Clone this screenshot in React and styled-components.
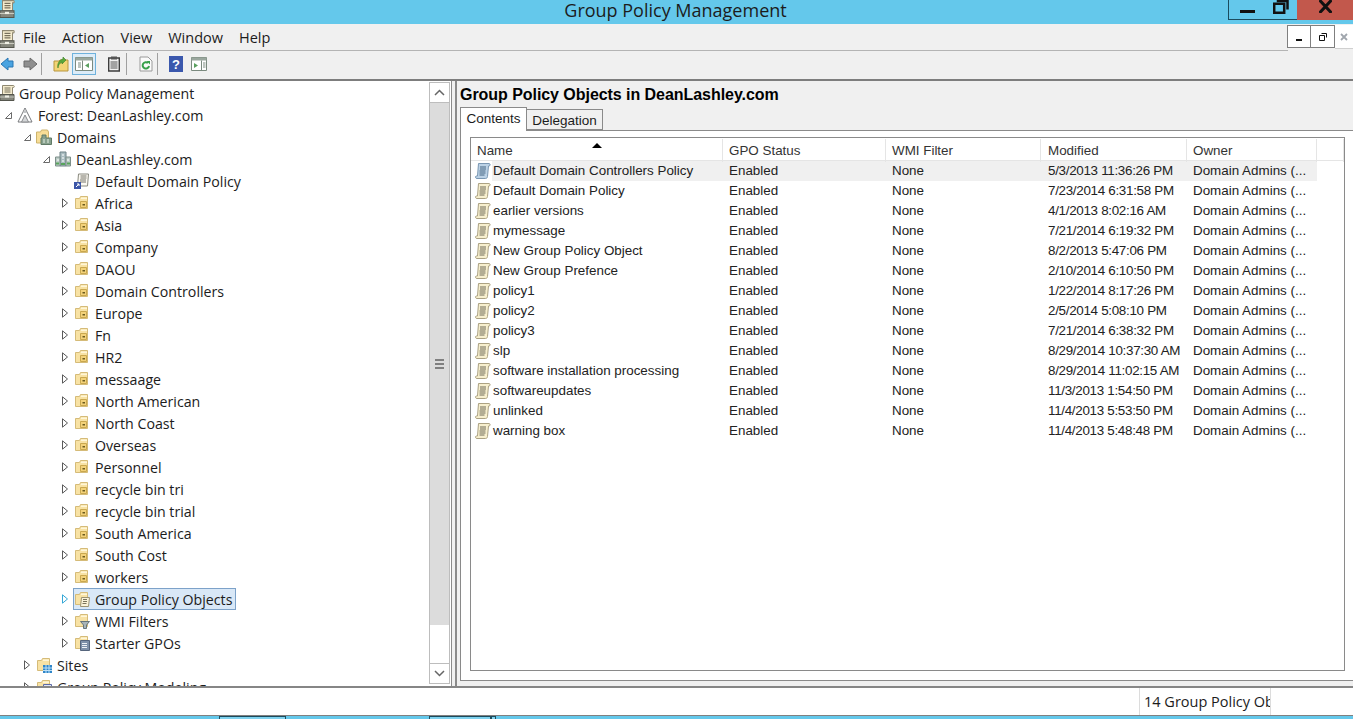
import React from "react";
import styled, { createGlobalStyle } from "styled-components";

const GlobalStyle = createGlobalStyle`
  html, body {
    margin: 0;
    height: 100%;
    overflow: hidden;
    background: #fff;
  }
  #root {
    height: 100%;
  }
`;

const treeFolders = [
  "Africa", "Asia", "Company", "DAOU", "Domain Controllers", "Europe", "Fn", "HR2",
  "messaage", "North American", "North Coast", "Overseas", "Personnel", "recycle bin tri",
  "recycle bin trial", "South America", "South Cost", "workers",
];

const gpoRows = [
  ["Default Domain Controllers Policy", "5/3/2013 11:36:26 PM"],
  ["Default Domain Policy", "7/23/2014 6:31:58 PM"],
  ["earlier versions", "4/1/2013 8:02:16 AM"],
  ["mymessage", "7/21/2014 6:19:32 PM"],
  ["New Group Policy Object", "8/2/2013 5:47:06 PM"],
  ["New Group Prefence", "2/10/2014 6:10:50 PM"],
  ["policy1", "1/22/2014 8:17:26 PM"],
  ["policy2", "2/5/2014 5:08:10 PM"],
  ["policy3", "7/21/2014 6:38:32 PM"],
  ["slp", "8/29/2014 10:37:30 AM"],
  ["software installation processing", "8/29/2014 11:02:15 AM"],
  ["softwareupdates", "11/3/2013 1:54:50 PM"],
  ["unlinked", "11/4/2013 5:53:50 PM"],
  ["warning box", "11/4/2013 5:48:48 PM"],
];

// icons
const ConsoleIcon = ({ height = 16 }) => (
  <svg width="16" height={height} viewBox="0 0 16 16" preserveAspectRatio="none">
    <path d="M2.500 .5h11c1 0 1 2 0 2h-1v7h-10z" fill="#f4ebcd" stroke="#8f8872" />
    <path d="M4.500 3h6M4.500 5h6M4.500 7h6" stroke="#77705c" />
    <path d="M0 9.500h14v6H0z" fill="#85867c" stroke="#55564d" />
    <path d="M0 12h14" stroke="#c9cabf" />
    <path d="M5 11.500h4" stroke="#f0f0e6" strokeWidth="2" />
  </svg>
);

const ForestIcon = () => (
  <svg width="16" height="16" viewBox="0 0 16 16">
    <path d="M8 1 15 15H1z" fill="#fff" stroke="#77797c" />
    <path d="M8 8 11.500 15H4.500z" fill="#d5d7d9" stroke="#8a8c8f" />
    <path d="M8 2 10 6H6z" fill="#c4c6c8" />
  </svg>
);

const DomainsIcon = () => (
  <svg width="16" height="16" viewBox="0 0 16 16">
    <path d="M.5 3h4l1-2h6l1 2v11H.5z" fill="#f7dd96" stroke="#cdb36c" />
    <path d="M6 6h4v3h5.500v6.500H5V9h1z" fill="#87a08d" stroke="#607a66" />
    <path d="M7 11h2M11 11h2M7 13h2M11 13h2" stroke="#e6f1e6" />
  </svg>
);

const DomainIcon = () => (
  <svg width="16" height="16" viewBox="0 0 16 16">
    <path d="M5 1h6v14H5z" fill="#a9bcc0" stroke="#6f8287" />
    <path d="M.5 6H5v9H.5zM11 6h4.500v9H11z" fill="#bccbc6" stroke="#7d8f8a" />
    <path d="M7 4h2M7 7h2M7 10h2M2 9h2M12 9h2" stroke="#fff" />
    <path d="M1 12.500h3M12 12.500h3M6 13h4" stroke="#58a55c" strokeWidth="2" />
  </svg>
);

const LinkedPolicyIcon = () => (
  <svg width="16" height="16" viewBox="0 0 16 16">
    <path d="M4.500 1h10l-1 12h-10z" fill="#fbf9f2" stroke="#8a8a80" />
    <path d="M6.500 3h6M6.500 5h6M6 7h6M6 9h6" stroke="#77756a" />
    <path d="M0 9h7v7H0z" fill="#3c56a8" />
    <path d="M2 14l3-3M3 11h2v2" stroke="#fff" fill="none" />
  </svg>
);

const FolderShape = ({ children }) => (
  <svg width="16" height="16" viewBox="0 0 16 16">
    <path d="M1.500 3.500h4l1-2h7v12h-12z" fill="#f8e2a4" stroke="#d5bb78" />
    <path d="M7 2.500h6v1.500H7z" fill="#fff6d8" />
    {children}
  </svg>
);

const OuIcon = () => (
  <FolderShape>
    <path d="M6.500 6.500h6v6h-6z" fill="#f3d27a" stroke="#caa84f" />
    <path d="M8.500 9h2.500v1.500H8.500z" fill="#6a5a20" />
  </FolderShape>
);

const GpoFolderIcon = () => (
  <FolderShape>
    <path d="M7.500 6.500h8l-1 9h-8z" fill="#fbf3d8" stroke="#9c9373" />
    <path d="M9 8.500h4M9 10.500h4M8.500 12.500h4" stroke="#7a735a" />
  </FolderShape>
);

const WmiIcon = () => (
  <FolderShape>
    <path d="M6.500 8.500h9l-3 3.500v3.500h-3V12z" fill="#a8b4b8" stroke="#68757a" />
  </FolderShape>
);

const StarterIcon = () => (
  <FolderShape>
    <path d="M6.500 5.500h9v10h-9z" fill="#7e90a8" stroke="#55657c" />
    <path d="M8 8.500h5M8 10.500h5M8 12.500h5" stroke="#eef2f6" />
  </FolderShape>
);

const SitesIcon = () => (
  <FolderShape>
    <path d="M7 8h9v8H7z" fill="#2f86c9" />
    <path d="M7 11h9M7 13.500h9M10 8v8M13 8v8" stroke="#bfe1f7" />
  </FolderShape>
);

const ModelingIcon = () => (
  <FolderShape>
    <path d="M7.500 5.500h8v9h-8z" fill="#dfe4f3" stroke="#5c6ba8" />
    <path d="M9 8.500h4M9 11.500h4" stroke="#3c56a8" />
  </FolderShape>
);

const ScrollIcon = ({ $blue }) => (
  <svg width="16" height="16" viewBox="0 0 16 16">
    <path
      d="M3.500.5h10.500c1.500 0 1.500 2.500 0 2.500h-.5l-1 10.500c-.2 1.500-1 2-2 2H2c-2 0-2-2.500-.5-2.500h1z"
      fill={$blue ? "#bcd2e6" : "#f7efce"}
      stroke={$blue ? "#7a97b3" : "#aca283"}
    />
    <path d="M5 4h6M5 6h6M4.500 8h6M4.500 10h6M4.500 12h5" stroke={$blue ? "#466683" : "#6f6a58"} />
  </svg>
);

const ExpandOpen = () => (
  <svg width="7" height="7" viewBox="0 0 7 7">
    <path d="M6.500.5v6h-6z" fill="#fff" stroke="#6b6b6b" />
  </svg>
);

const ExpandClosed = ({ $hot }) => (
  <svg width="6" height="10" viewBox="0 0 6 10">
    <path d="M.5.8 5.500 5 .5 9.200z" fill="#fff" stroke={$hot ? "#35a7d6" : "#5a5a5a"} />
  </svg>
);

const ForwardIcon = () => (
  <svg width="16" height="16" viewBox="0 0 16 16">
    <path d="M15 8 8 2v3H2v6h6v3z" fill="#8f8f8f" stroke="#6a6a6a" />
  </svg>
);

const UpIcon = () => (
  <svg width="16" height="16" viewBox="0 0 16 16">
    <path d="M1 5h5l1-1h8v11H1z" fill="#f3d475" stroke="#b8963f" />
    <path d="M5 12c0-3 2-5 4-6V8l4-4-3-3v2C6 4 4 8 5 12z" fill="#5aa83c" stroke="#3b7f25" strokeWidth=".6" />
  </svg>
);

const PaneLeftIcon = () => (
  <svg width="18" height="16" viewBox="0 0 18 16">
    <path d="M.5 1.500h17v13H.5z" fill="#fff" stroke="#7b8a7f" />
    <path d="M.5 1.500h17v3H.5z" fill="#9aa79e" />
    <path d="M3 7h3M3 9h3M3 11h3M7.500 4.500v10" stroke="#7b8a7f" />
    <path d="M14 7v5l-4-2.500z" fill="#5aa05f" />
  </svg>
);

const PaneRightIcon = () => (
  <svg width="16" height="16" viewBox="0 0 16 16">
    <path d="M.5 1.500h15v13H.5z" fill="#fff" stroke="#7b8a7f" />
    <path d="M.5 1.500h15v3H.5z" fill="#9aa79e" />
    <path d="M12 7h2.500M12 9h2.500M12 11h2.500M10.500 4.500v10" stroke="#7b8a7f" />
    <path d="M3 7v5l4-2.500z" fill="#5aa05f" />
  </svg>
);

const ClipboardIcon = () => (
  <svg width="12" height="16" viewBox="0 0 12 16">
    <path d="M.7 2h10.600v13H.7z" fill="#f2f2f2" stroke="#3d3d3d" strokeWidth="1.400" />
    <path d="M3 .5h6v3H3z" fill="#555" />
    <path d="M2.500 6h7M2.500 8h7M2.500 10h7M2.500 12h7" stroke="#555" />
  </svg>
);

const RefreshIcon = () => (
  <svg width="14" height="16" viewBox="0 0 14 16">
    <path d="M1 1h8l4 4v10H1z" fill="#fafafa" stroke="#9a9a9a" />
    <path d="M10 10a3.200 3.200 0 1 1-1-3" fill="none" stroke="#37a04a" strokeWidth="2" />
    <path d="M7.500 5h3.500v3.500z" fill="#37a04a" />
  </svg>
);

const HelpIcon = () => (
  <svg width="14" height="16" viewBox="0 0 14 16">
    <path d="M0 0h14v16H0z" fill="#3b58ad" />
    <text x="7" y="13" textAnchor="middle" fill="#fff" fontSize="13" fontWeight="700" fontFamily="Liberation Sans, sans-serif">?</text>
  </svg>
);

const MinGlyph = () => (
  <svg width="15" height="3" viewBox="0 0 15 3">
    <path d="M0 0h15v3H0z" fill="#111" />
  </svg>
);

const RestoreGlyph = () => (
  <svg width="16" height="14" viewBox="0 0 16 14">
    <path d="M5 0v1h9.500v8.500" fill="none" stroke="#111" strokeWidth="2.500" />
    <path d="M1.200 3.700h10v9h-10z" fill="none" stroke="#111" strokeWidth="2.500" />
  </svg>
);

const CloseGlyph = () => (
  <svg width="13" height="13" viewBox="0 0 13 13">
    <path d="M.5 0l12 13M12.500 0 .5 13" stroke="#111" strokeWidth="3" />
  </svg>
);

// window chrome
const Page = styled.div`
  display: flex;
  flex-direction: column;
  width: 1353px;
  height: 719px;
  overflow: hidden;
  background: #fff;
  font-family: "Open Sans", "Liberation Sans", sans-serif;
  color: #1c1c1c;
`;

const TitleBar = styled.div`
  display: grid;
  grid-template-columns: 1fr auto 1fr;
  align-items: start;
  flex: none;
  height: 24px;
  background: #64c8eb;
`;

const AppIcon = styled.div`
  display: flex;
  height: 18px;
`;

const TitleText = styled.div`
  margin-left: -2px;
  font-size: 18px;
  line-height: 20px;
`;

const WindowButtons = styled.div`
  display: flex;
  justify-content: flex-end;
`;

const CaptionButton = styled.div`
  display: flex;
  align-items: flex-start;
  justify-content: center;
  width: ${(p) => p.$width}px;
  height: 20px;
  box-sizing: border-box;
  padding-top: ${(p) => p.$top || 0}px;
  background: ${(p) => (p.$close ? "#c2584c" : "transparent")};
  border: ${(p) => (p.$close ? "none" : "1px solid #1b4c5e")};
  border-top: none;
  border-left-width: ${(p) => (p.$first || p.$close ? 1 : 0)}px;
  border-right-width: 0;
`;

const MenuRow = styled.div`
  display: flex;
  flex: none;
  height: 27px;
  background: #f0f0f0;
`;

const MenuBar = styled.div`
  display: flex;
  flex: 1;
  align-items: center;
  gap: 16px;
  box-sizing: border-box;
  border-bottom: 1px solid #b4b4b4;
  font-size: 14.5px;
`;

const MenuIcon = styled.span`
  display: flex;
  width: 16px;
  margin-right: -9px;
  margin-top: 3px;
`;

const MdiButtons = styled.div`
  display: flex;
  flex: none;
  width: 66px;
  height: 25px;
  padding-top: 1px;
  margin-left: -1px;
`;

const MdiButton = styled.div`
  display: flex;
  align-items: center;
  justify-content: center;
  width: 24px;
  height: 23px;
  box-sizing: border-box;
  padding-top: ${(p) => p.$low || 0}px;
  background: #fff;
  border: 1px solid #7f7f7f;
  border-left-width: ${(p) => (p.$first ? 1 : 0)}px;
`;

const MdiClose = styled.div`
  display: flex;
  align-items: center;
  justify-content: center;
  flex: 1;
  height: 23px;
  background: #fff;
  border-bottom: 1px solid #d0d0d0;
`;

const ToolBar = styled.div`
  display: flex;
  flex: none;
  align-items: center;
  height: 30px;
  box-sizing: border-box;
  padding-bottom: 3px;
  background: #f0f0f0;
  border-bottom: 2px solid #7d7d7d;
`;

const ToolSlot = styled.div`
  display: flex;
  align-items: center;
  justify-content: center;
  flex: none;
  box-sizing: border-box;
  width: ${(p) => p.$width}px;
  height: 22px;
  margin-left: ${(p) => p.$left || 0}px;
  background: ${(p) => (p.$active ? "#dcecf8" : "transparent")};
  border: ${(p) => (p.$active ? "1px solid #6fb2dc" : "none")};
`;

const ToolDivider = styled.div`
  flex: none;
  width: 1px;
  height: 22px;
  margin-left: ${(p) => p.$left}px;
  background: #a0a0a0;
`;

const Workspace = styled.div`
  display: flex;
  flex: none;
  height: 605px;
  border-bottom: 2px solid #868686;
`;

const TreePane = styled.div`
  display: flex;
  flex: none;
  width: 452px;
  box-sizing: border-box;
  background: #fff;
  border-right: 1px solid #8a8a8a;
`;

const TreeList = styled.div`
  flex: 1;
  min-width: 0;
  overflow: hidden;
  padding-top: 1px;
`;

const TreeRow = styled.div`
  display: flex;
  align-items: center;
  height: 22px;
  padding-left: ${(p) => (p.$level ? p.$level * 19 - 14 : 0)}px;
  font-size: 14.2px;
  white-space: nowrap;
`;

const ExpanderBox = styled.span`
  display: flex;
  align-items: center;
  flex: none;
  width: 12px;
`;

const TreeItem = styled.div`
  display: flex;
  align-items: center;
  height: 22px;
  box-sizing: border-box;
  margin-left: -1px;
  padding-right: 3px;
  background: ${(p) => (p.$selected ? "#d9e8f7" : "transparent")};
  border: 1px solid ${(p) => (p.$selected ? "#7da2c9" : "transparent")};
`;

const TreeIconBox = styled.span`
  display: flex;
  flex: none;
  width: 16px;
  margin-right: ${(p) => p.$gap}px;
`;

const TreeLabel = styled.span`
  margin-top: 2px;
  line-height: 20px;
`;

const ScrollBar = styled.div`
  display: flex;
  flex-direction: column;
  flex: none;
  width: 21px;
  box-sizing: border-box;
  margin: 1px 1px 2px 0;
  border-left: 1px solid #bdbdbd;
  border-right: 1px solid #bdbdbd;
  background: #fff;
`;

const ScrollButton = styled.div`
  display: flex;
  align-items: center;
  justify-content: center;
  flex: none;
  height: 21px;
  box-sizing: border-box;
  background: #fff;
  border-top: 1px solid #bdbdbd;
  border-bottom: 1px solid #bdbdbd;
`;

const ScrollThumb = styled.div`
  display: flex;
  flex: none;
  height: 522px;
  align-items: center;
  justify-content: center;
  background: #dcdcdc;
`;

const ScrollTrack = styled.div`
  flex: 1;
`;

const Grip = styled.div`
  width: 9px;
  height: 10px;
  background: repeating-linear-gradient(#808080 0 2px, transparent 2px 4px);
`;

const Splitter = styled.div`
  flex: none;
  width: 3px;
  background: #f0f0f0;
`;

const DetailPane = styled.div`
  display: flex;
  flex: 1;
  flex-direction: column;
  min-width: 0;
  box-sizing: border-box;
  border-left: 2px solid #8a8a8a;
  padding: 0 0 5px 3px;
  background: #f0f0f0;
`;

const PaneHeading = styled.div`
  flex: none;
  height: 25px;
  font-family: "Liberation Sans", Arial, sans-serif;
  font-size: 16px;
  font-weight: 700;
  line-height: 28px;
  letter-spacing: -0.05px;
  color: #000;
`;

const TabStrip = styled.div`
  display: flex;
  flex: none;
  align-items: flex-end;
  height: 24px;
  font-family: "Liberation Sans", Arial, sans-serif;
  font-size: 13.5px;
`;

const Tab = styled.div`
  position: relative;
  z-index: ${(p) => (p.$active ? 1 : 0)};
  box-sizing: border-box;
  flex: none;
  width: ${(p) => p.$width}px;
  height: ${(p) => (p.$active ? 24 : 21)}px;
  margin-bottom: ${(p) => (p.$active ? -1 : 0)}px;
  padding-top: 3px;
  text-align: center;
  background: ${(p) => (p.$active ? "#fff" : "#f0f0f0")};
  border: 1px solid #8a8a8a;
  border-bottom-width: ${(p) => (p.$active ? 0 : 1)}px;
  border-left-width: ${(p) => (p.$active ? 1 : 0)}px;
`;

const TabBody = styled.div`
  flex: 1;
  min-height: 0;
  box-sizing: border-box;
  padding: 6px 8px 9px 9px;
  background: #fff;
  border: 1px solid #8a8a8a;
  border-right: none;
`;

const ListFrame = styled.div`
  height: 100%;
  box-sizing: border-box;
  padding-top: 1px;
  border: 1px solid #8a8a8a;
  font-family: "Liberation Sans", Arial, sans-serif;
  font-size: 13.4px;
  color: #222;
`;

const colTemplate = "252px 163px 155px 146px 130px 1fr";

const HeaderRow = styled.div`
  display: grid;
  grid-template-columns: ${colTemplate};
  height: 22px;
  box-sizing: border-box;
  border-bottom: 1px solid #e5e5e5;
`;

const HeaderCell = styled.div`
  position: relative;
  padding-left: ${(p) => p.$pad || 6}px;
  line-height: 23px;
  border-right: 1px solid #e5e5e5;
  color: #333;
`;

const SortArrow = styled.span`
  position: absolute;
  left: 121px;
  top: 4px;
  width: 0;
  height: 0;
  border-style: solid;
  border-width: 0 5px 5px 5px;
  border-color: transparent transparent #000 transparent;
`;

const BodyRow = styled.div`
  display: grid;
  grid-template-columns: ${colTemplate};
  height: 20px;
  line-height: 20px;
  white-space: nowrap;
`;

const NameCell = styled.div`
  display: flex;
  align-items: center;
  overflow: hidden;
`;

const RowIconBox = styled.span`
  display: flex;
  flex: none;
  width: 16px;
  margin: 0 1px 0 4px;
`;

const NameText = styled.span`
  flex: 1;
  height: 20px;
  padding-left: 1px;
  background: ${(p) => (p.$hot ? "#f0f0f0" : "transparent")};
`;

const TextCell = styled.div`
  padding-left: ${(p) => p.$pad || 6}px;
  letter-spacing: ${(p) => p.$spacing || 0}px;
  background: ${(p) => (p.$hot ? "#f0f0f0" : "transparent")};
`;

const StatusBar = styled.div`
  display: flex;
  flex: none;
  height: 27px;
  padding-left: 1139px;
  background: #fff;
  border-bottom: 1px solid #808080;
`;

const StatusCell = styled.div`
  width: 132px;
  box-sizing: border-box;
  padding-left: 4px;
  overflow: hidden;
  white-space: nowrap;
  font-size: 14.5px;
  line-height: 28px;
  border-left: 1px solid #dcdcdc;
  border-right: 1px solid #dcdcdc;
`;

const TaskBar = styled.div`
  display: flex;
  flex: 1;
  background: #64c8eb;
`;

const TaskItem = styled.div`
  flex: none;
  width: ${(p) => p.$width}px;
  margin-left: ${(p) => p.$left}px;
  box-sizing: border-box;
  background: #7fd2ef;
  border: 1px solid #1b4c5e;
  border-bottom: none;
`;

const TreeNode = ({ level, state, icon, label, selected }) => (
  <TreeRow $level={level}>
    {level > 0 && (
      <ExpanderBox>
        {state === "open" && <ExpandOpen />}
        {state === "closed" && <ExpandClosed />}
        {state === "hot" && <ExpandClosed $hot />}
      </ExpanderBox>
    )}
    <TreeItem $selected={selected}>
      <TreeIconBox $gap={level ? 5 : 3}>{icon}</TreeIconBox>
      <TreeLabel>{label}</TreeLabel>
    </TreeItem>
  </TreeRow>
);

const App = () => (
  <Page>
    <GlobalStyle />
    <TitleBar>
      <AppIcon>
        <ConsoleIcon height={18} />
      </AppIcon>
      <TitleText>Group Policy Management</TitleText>
      <WindowButtons>
        <CaptionButton $width={37} $top={10} $first>
          <MinGlyph />
        </CaptionButton>
        <CaptionButton $width={32}>
          <RestoreGlyph />
        </CaptionButton>
        <CaptionButton $width={56} $close>
          <CloseGlyph />
        </CaptionButton>
      </WindowButtons>
    </TitleBar>

    <MenuRow>
      <MenuBar>
        <MenuIcon>
          <ConsoleIcon height={18} />
        </MenuIcon>
        <span>File</span>
        <span>Action</span>
        <span>View</span>
        <span>Window</span>
        <span>Help</span>
      </MenuBar>
      <MdiButtons>
        <MdiButton $first $low={7}>
          <svg width="6" height="2" viewBox="0 0 6 2"><path d="M0 0h6v2H0z" fill="#111" /></svg>
        </MdiButton>
        <MdiButton>
          <svg width="8" height="8" viewBox="0 0 8 8">
            <path d="M2.500.5h5v4M.5 2.500h5v5h-5z" fill="none" stroke="#111" />
          </svg>
        </MdiButton>
        <MdiClose>
          <svg width="8" height="8" viewBox="0 0 8 8">
            <path d="M1 1l6 6M7 1 1 7" stroke="#a0a6ad" strokeWidth="1.800" />
          </svg>
        </MdiClose>
      </MdiButtons>
    </MenuRow>

    <ToolBar>
      <ToolSlot $width={14}>
        <svg width="14" height="16" viewBox="2 0 14 16"><path d="M3 8l7-6v3h5v6h-5v3z" fill="#4aa3e0" stroke="#2876b4" /></svg>
      </ToolSlot>
      <ToolSlot $width={18} $left={7}><ForwardIcon /></ToolSlot>
      <ToolDivider $left={2} />
      <ToolSlot $width={16} $left={11}><UpIcon /></ToolSlot>
      <ToolSlot $width={24} $left={3} $active><PaneLeftIcon /></ToolSlot>
      <ToolSlot $width={14} $left={11}><ClipboardIcon /></ToolSlot>
      <ToolDivider $left={5} />
      <ToolSlot $width={14} $left={12}><RefreshIcon /></ToolSlot>
      <ToolDivider $left={4} />
      <ToolSlot $width={14} $left={11}><HelpIcon /></ToolSlot>
      <ToolSlot $width={16} $left={8}><PaneRightIcon /></ToolSlot>
    </ToolBar>

    <Workspace>
      <TreePane>
        <TreeList>
          <TreeNode level={0} icon={<ConsoleIcon />} label="Group Policy Management" />
          <TreeNode level={1} state="open" icon={<ForestIcon />} label="Forest: DeanLashley.com" />
          <TreeNode level={2} state="open" icon={<DomainsIcon />} label="Domains" />
          <TreeNode level={3} state="open" icon={<DomainIcon />} label="DeanLashley.com" />
          <TreeNode level={4} state="none" icon={<LinkedPolicyIcon />} label="Default Domain Policy" />
          {treeFolders.map((name) => (
            <TreeNode key={name} level={4} state="closed" icon={<OuIcon />} label={name} />
          ))}
          <TreeNode level={4} state="hot" icon={<GpoFolderIcon />} label="Group Policy Objects" selected />
          <TreeNode level={4} state="closed" icon={<WmiIcon />} label="WMI Filters" />
          <TreeNode level={4} state="closed" icon={<StarterIcon />} label="Starter GPOs" />
          <TreeNode level={2} state="closed" icon={<SitesIcon />} label="Sites" />
          <TreeNode level={2} state="closed" icon={<ModelingIcon />} label="Group Policy Modeling" />
        </TreeList>
        <ScrollBar>
          <ScrollButton>
            <svg width="11" height="7" viewBox="0 0 11 7"><path d="M1 6l4.500-4.500L10 6" fill="none" stroke="#666" strokeWidth="1.500" /></svg>
          </ScrollButton>
          <ScrollThumb><Grip /></ScrollThumb>
          <ScrollTrack />
          <ScrollButton>
            <svg width="11" height="7" viewBox="0 0 11 7"><path d="M1 1l4.500 4.500L10 1" fill="none" stroke="#666" strokeWidth="1.500" /></svg>
          </ScrollButton>
        </ScrollBar>
      </TreePane>
      <Splitter />
      <DetailPane>
        <PaneHeading>Group Policy Objects in DeanLashley.com</PaneHeading>
        <TabStrip>
          <Tab $active $width={67}>Contents</Tab>
          <Tab $width={76}>Delegation</Tab>
        </TabStrip>
        <TabBody>
          <ListFrame>
            <HeaderRow>
              <HeaderCell>Name<SortArrow /></HeaderCell>
              <HeaderCell>GPO Status</HeaderCell>
              <HeaderCell>WMI Filter</HeaderCell>
              <HeaderCell $pad={7}>Modified</HeaderCell>
              <HeaderCell>Owner</HeaderCell>
              <HeaderCell />
            </HeaderRow>
            {gpoRows.map(([name, modified], i) => (
              <BodyRow key={name}>
                <NameCell>
                  <RowIconBox><ScrollIcon $blue={i === 0} /></RowIconBox>
                  <NameText $hot={i === 0}>{name}</NameText>
                </NameCell>
                <TextCell $hot={i === 0}>Enabled</TextCell>
                <TextCell $hot={i === 0}>None</TextCell>
                <TextCell $hot={i === 0} $pad={7} $spacing={-0.3}>{modified}</TextCell>
                <TextCell $hot={i === 0}>Domain Admins (...</TextCell>
              </BodyRow>
            ))}
          </ListFrame>
        </TabBody>
      </DetailPane>
    </Workspace>

    <StatusBar>
      <StatusCell>14 Group Policy Objects</StatusCell>
    </StatusBar>
    <TaskBar>
      <TaskItem $left={219} $width={67} />
      <TaskItem $left={143} $width={62} />
      <TaskItem $left={0} $width={5} />
    </TaskBar>
  </Page>
);

export default App;
